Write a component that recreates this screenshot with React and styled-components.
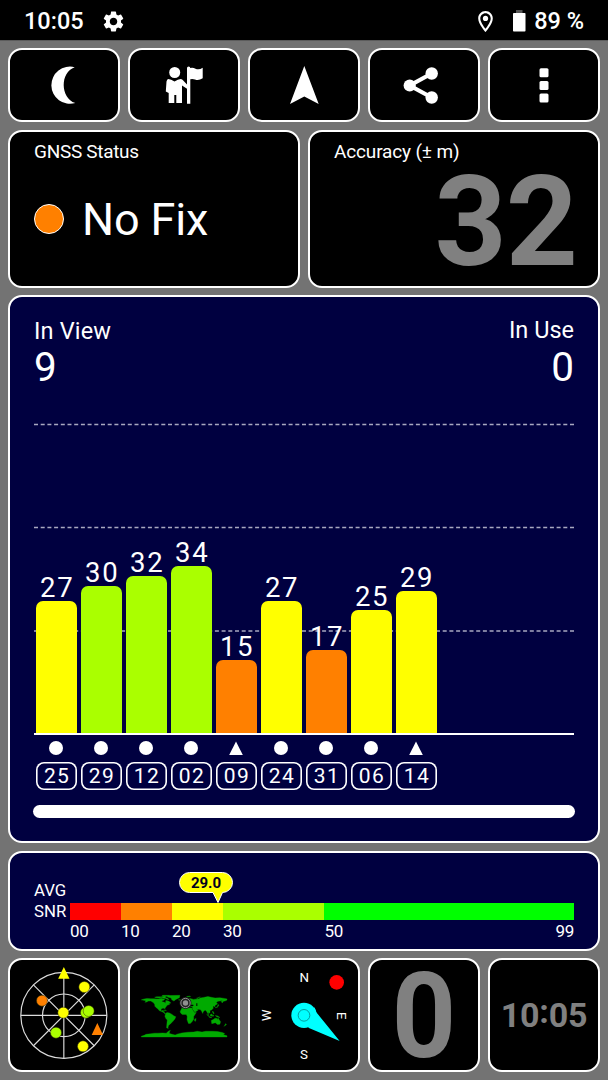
import React from "react";
import styled, { createGlobalStyle } from "styled-components";
import { MdSettings, MdOutlineLocationOn } from "react-icons/md";

const GlobalStyle = createGlobalStyle`
  * { box-sizing: border-box; }
  body { margin: 0; background: #737373; font-family: Roboto, "Liberation Sans", sans-serif; color: #fff; }
`;

const Screen = styled.div`
  width: 608px;
  height: 1080px;
  display: flex;
  flex-direction: column;
  background: #737373;
  overflow: hidden;
`;

const StatusBar = styled.header`
  height: 41px;
  flex: none;
  display: flex;
  align-items: center;
  padding: 2px 24px 0 24px;
  background: #000;
  border-bottom: 1px solid #5c5c5c;
  font-size: 23.5px;
  font-weight: 500;
  svg { display: block; }
`;
const Clock = styled.span`
  width: 77px;
`;
const StatusIcons = styled.div`
  margin-left: auto;
  display: flex;
  align-items: center;
`;
const BatteryIcon = styled.svg`
  margin: 0 8px 0 15px;
`;

const Content = styled.main`
  flex: 1;
  display: flex;
  flex-direction: column;
  justify-content: space-between;
  padding: 7px 8px 8px;
`;

const Card = styled.section`
  background: ${(p) => (p.$navy ? "#000040" : "#000")};
  border: 2px solid #fff;
  border-radius: 14px;
  min-width: 0;
`;

const Row = styled.div`
  display: flex;
  gap: 8px;
  height: ${(p) => p.$height}px;
  flex: none;
  > * { flex: 1 1 0; }
`;

const ToolButton = styled.button`
  background: #000;
  border: 2px solid #fff;
  border-radius: 14px;
  padding: 0;
  svg { display: block; width: 108px; height: 70px; }
`;

const InfoCard = styled(Card)`
  padding: 9px 21px 0 24px;
`;
const InfoLabel = styled.div`
  font-size: 19px;
  line-height: 22px;
  letter-spacing: ${(p) => p.$spacing || 0}px;
`;
const FixState = styled.div`
  display: flex;
  align-items: center;
  gap: 18px;
  height: 54px;
  margin-top: 29px;
  font-size: 45px;
  letter-spacing: -0.15px;
`;
const FixDot = styled.span`
  width: 30px;
  height: 30px;
  border-radius: 50%;
  background: #ff8000;
  border: 1px solid #fff;
`;
const AccuracyValue = styled.div`
  margin-top: 14px;
  font-size: 126px;
  line-height: 90px;
  font-weight: 700;
  letter-spacing: -1px;
  text-align: right;
  color: #808080;
`;

const SignalCard = styled(Card)`
  height: 548px;
  flex: none;
  display: flex;
  flex-direction: column;
  padding: 20px 24px 0;
`;
const Counts = styled.div`
  display: flex;
  justify-content: space-between;
  height: 84px;
`;
const Count = styled.div`
  text-align: ${(p) => p.$align || "left"};
`;
const CountLabel = styled.div`
  font-size: 23.5px;
  line-height: 27px;
  padding-top: ${(p) => (p.$low ? 1 : 0)}px;
  height: 28px;
  letter-spacing: ${(p) => (p.$low ? 0.15 : 0)}px;
`;
const CountValue = styled.div`
  font-size: 40.5px;
  line-height: 44px;
`;

const Plot = styled.div`
  position: relative;
  height: 334px;
  border-bottom: 2px solid #fff;
`;
const GridLines = styled.svg`
  position: absolute;
  left: 0;
  top: -1px;
`;
const Columns = styled.div`
  position: relative;
  display: flex;
  align-items: flex-end;
  gap: 4.4px;
  height: 100%;
  padding-left: 2.3px;
`;
const Column = styled.div`
  width: 40.6px;
  display: flex;
  flex-direction: column;
  align-items: center;
`;
const BarValue = styled.span`
  font-size: 27.5px;
  line-height: 24px;
  letter-spacing: 1.7px;
  margin: 0 0 1px 1.2px;
`;
const Bar = styled.div`
  width: 100%;
  height: ${(p) => p.$value * 4.93 - 0.6}px;
  border-radius: 7px 7px 0 0;
  background: ${(p) => p.$color};
`;
const Satellites = styled.div`
  display: flex;
  gap: 4.4px;
  padding: 6px 0 0 2.1px;
`;
const Marker = styled.svg`
  display: block;
  width: 14px;
  height: 14px;
  margin-bottom: 7px;
`;
const SatelliteId = styled.span`
  width: 100%;
  height: 27.5px;
  box-shadow: inset 0 0 0 1.6px #fff;
  border-radius: 8px;
  font-size: 21px;
  line-height: 28px;
  letter-spacing: 1.4px;
  padding-left: 1.4px;
  text-align: center;
`;
const ScrollTrack = styled.div`
  height: 13px;
  margin: 15.5px -1px 0;
  border-radius: 7px;
  background: #fff;
`;

const SnrCard = styled(Card)`
  height: 100px;
  flex: none;
  display: flex;
  padding: 0 24px;
`;
const SnrCaption = styled.div`
  width: 36px;
  padding-top: 27px;
  font-size: 16.8px;
  line-height: 21px;
`;
const SnrScale = styled.div`
  position: relative;
  flex: 1;
  padding-top: 50px;
`;
const Segments = styled.div`
  display: flex;
  height: 17px;
`;
const Segment = styled.div`
  width: ${(p) => p.$width}px;
  background: ${(p) => p.$color};
`;
const Ticks = styled.div`
  display: flex;
  font-size: 17px;
  line-height: 20px;
  letter-spacing: -0.3px;
  margin-top: 1px;
`;
const Tick = styled.span`
  width: ${(p) => p.$width}px;
`;
const Bubble = styled.div`
  position: absolute;
  left: 109px;
  top: 19px;
  width: 54px;
  height: 31px;
  font-size: 15px;
  font-weight: 700;
  line-height: 22px;
  text-align: center;
  color: #000020;
  svg { position: absolute; left: 0; top: 0; }
  span { position: relative; }
`;

const Tile = styled(Card)`
  display: flex;
  align-items: center;
  justify-content: center;
  color: #808080;
  font-weight: 700;
  svg { display: block; width: 108px; height: 110px; flex: none; }
`;
const Speed = styled.span`
  font-size: 118px;
  line-height: 110px;
  padding-top: 3px;
  transform: scaleX(0.95);
`;
const TileClock = styled.span`
  font-size: 34px;
  line-height: 40px;
  padding-bottom: 2px;
  letter-spacing: -0.2px;
`;
const Colon = styled.span`
  line-height: 1;
  vertical-align: 3.5px;
`;

const YELLOW = "#ffff00";
const LIME = "#aaff00";
const ORANGE = "#ff8000";

const satellites = [
  { id: "25", snr: 27, color: YELLOW },
  { id: "29", snr: 30, color: LIME },
  { id: "12", snr: 32, color: LIME },
  { id: "02", snr: 34, color: LIME },
  { id: "09", snr: 15, color: ORANGE, triangle: true },
  { id: "24", snr: 27, color: YELLOW },
  { id: "31", snr: 17, color: ORANGE },
  { id: "06", snr: 25, color: YELLOW },
  { id: "14", snr: 29, color: YELLOW, triangle: true },
];

const segments = [
  { label: "00", width: 51, color: "#ff0000" },
  { label: "10", width: 51, color: ORANGE },
  { label: "20", width: 51, color: YELLOW },
  { label: "30", width: 101.5, color: LIME },
  { label: "50", width: 249.5, color: "#00ff00" },
];

function Toolbar() {
  return (
    <Row $height={74}>
      <ToolButton aria-label="Night mode">
        <svg viewBox="10 50 108 70" fill="#fff">
          <path d="M74.700 67.200A18.600 18.600 0 1 0 75.300 103C60 98 60 72 74.700 67.200Z" />
        </svg>
      </ToolButton>
      <ToolButton aria-label="Survey">
        <svg viewBox="130 50 108 70" fill="#fff">
          <circle cx="174.700" cy="72.500" r="5.500" />
          <path d="M168.200 79Q171 79 174.500 81.500Q178 79 180.800 79Q182.300 79 183.200 80.500L187 84.500V68Q187 66.500 188.700 66.500Q190.300 66.500 190.300 68Q193 67.300 195.500 68.700Q199 70.300 202.700 67.700V78.300Q198.500 81 195 79.500Q192.500 78.500 190.300 79.300V103.700H187V88.700L182 85.500V103H176.300V95H174.300V103H168.700V93L165.800 91.500L166.500 81.500Q167 79 168.200 79Z" />
        </svg>
      </ToolButton>
      <ToolButton aria-label="Navigate">
        <svg viewBox="250 50 108 70" fill="#fff">
          <path d="M304.300 66L318.700 104L304.300 96.500L290 104Z" />
        </svg>
      </ToolButton>
      <ToolButton aria-label="Share">
        <svg viewBox="370 50 108 70" fill="#fff">
          <path d="M431.700 73.500L409.700 85.500L431.700 97.500" fill="none" stroke="#fff" strokeWidth="4.200" />
          <circle cx="409.700" cy="85.500" r="6.100" />
          <circle cx="431.700" cy="73.500" r="6.200" />
          <circle cx="431.700" cy="97.500" r="6.200" />
        </svg>
      </ToolButton>
      <ToolButton aria-label="Menu">
        <svg viewBox="490 50 108 70" fill="#fff">
          <rect x="539.500" y="68.300" width="9" height="9" rx="1.500" />
          <rect x="539.500" y="81" width="9" height="9" rx="1.500" />
          <rect x="539.500" y="93.600" width="9" height="9" rx="1.500" />
        </svg>
      </ToolButton>
    </Row>
  );
}

function SignalChart() {
  return (
    <SignalCard $navy>
      <Counts>
        <Count>
          <CountLabel $low>In View</CountLabel>
          <CountValue>9</CountValue>
        </Count>
        <Count $align="right">
          <CountLabel>In Use</CountLabel>
          <CountValue>0</CountValue>
        </Count>
      </Counts>
      <Plot>
        <GridLines width="540" height="333" stroke="#a8a8c0" strokeWidth="1.300" strokeDasharray="4 2.700">
          <path d="M0 24.500H540M0 127.500H540M0 231H540" />
        </GridLines>
        <Columns>
          {satellites.map((s) => (
            <Column key={s.id}>
              <BarValue>{s.snr}</BarValue>
              <Bar $value={s.snr} $color={s.color} />
            </Column>
          ))}
        </Columns>
      </Plot>
      <Satellites>
        {satellites.map((s) => (
          <Column key={s.id}>
            <Marker viewBox="0 0 14 14" fill="#fff">
              {s.triangle ? <path d="M7 0.500L13.800 14H0.200Z" /> : <circle cx="7" cy="7" r="7" />}
            </Marker>
            <SatelliteId>{s.id}</SatelliteId>
          </Column>
        ))}
      </Satellites>
      <ScrollTrack />
    </SignalCard>
  );
}

function AverageSnr() {
  return (
    <SnrCard $navy>
      <SnrCaption>
        AVG
        <br />
        SNR
      </SnrCaption>
      <SnrScale>
        <Segments>
          {segments.map((s) => (
            <Segment key={s.label} $width={s.width} $color={s.color} />
          ))}
        </Segments>
        <Ticks>
          {segments.map((s) => (
            <Tick key={s.label} $width={s.label === "50" ? 231 : s.width}>
              {s.label}
            </Tick>
          ))}
          <span>99</span>
        </Ticks>
        <Bubble>
          <svg width="54" height="31" viewBox="0 0 54 31">
            <path d="M10.500 0.500H43.500A10 10 0 0 1 43.500 20.500L39 30.500L34 20.500H10.500A10 10 0 0 1 10.500 0.500Z" fill={YELLOW} stroke="#fff" />
          </svg>
          <span>29.0</span>
        </Bubble>
      </SnrScale>
    </SnrCard>
  );
}

function SkyView() {
  const dots = [
    [126, 152, ORANGE],
    [253, 111, YELLOW],
    [258, 188, LIME],
    [266, 183, LIME],
    [190, 188, YELLOW],
    [168, 248, LIME],
    [249, 289, YELLOW],
  ];
  return (
    <svg viewBox="30 30 324 330">
      <g fill="none" stroke="#dcdcdc" strokeWidth="3.500">
        <circle cx="191.500" cy="196" r="129" />
        <circle cx="191.500" cy="196" r="64" />
        <path d="M62.500 196H320.500M191.500 67V325M100.300 104.800L282.700 287.200M282.700 104.800L100.300 287.200" />
      </g>
      {dots.map(([x, y, color]) => (
        <circle key={`${x}-${y}`} cx={x} cy={y} r="16.500" fill={color} stroke="#303000" strokeWidth="1.500" />
      ))}
      <path d="M191.500 51L208.500 86H174.500Z" fill={YELLOW} />
      <path d="M292 219L309 255H275Z" fill={ORANGE} />
    </svg>
  );
}

// Coastlines as longitude,latitude pairs
const land = [
  "-180,65 -168,69 -156,71 -140,70 -128,70 -115,69 -108,69 -95,72 -90,70 -82,70 -84,64 -94,60 -92,57 -82,55 -80,51 -78,55 -77,62 -70,61 -64,59 -56,52 -65,49 -61,46 -70,43 -75,38 -76,35 -81,31 -80,25 -83,30 -90,30 -97,27 -97,21 -94,18 -90,21 -87,21 -88,16 -83,15 -83,10 -78,8 -83,8 -88,13 -95,16 -105,20 -110,27 -117,32 -123,38 -124,47 -130,54 -140,60 -150,60 -158,56 -165,55 -160,60 -166,62",
  "-124,76 -116,74 -105,73 -95,75 -88,73 -80,72 -72,68 -64,66 -68,71 -80,75 -78,77 -92,77 -100,78 -116,78",
  "-95,80 -90,84 -62,84 -76,79 -84,77",
  "-72,78 -66,83 -18,84 -20,74 -35,67 -43,60 -52,65 -55,73 -66,76",
  "-78,8 -72,12 -62,10 -51,4 -44,-2 -35,-6 -39,-15 -48,-26 -58,-36 -65,-42 -68,-50 -67,-55 -74,-52 -73,-40 -71,-20 -77,-13 -81,-4",
  "-17,15 -10,30 -5,36 10,37 20,32 32,31 36,22 43,12 51,12 40,-5 40,-16 33,-27 26,-34 18,-34 12,-18 13,-5 9,4 -8,4 -14,9",
  "-9,37 -9,43 -1,44 -4,48 8,54 10,57 20,54 24,59 22,64 17,60 12,56 5,60 12,67 25,71 40,67 45,68 60,69 68,73 80,75 100,79 113,76 130,73 150,74 170,71 180,69 180,65 177,62 163,58 160,52 156,58 162,62 142,59 135,54 140,48 130,42 129,35 126,38 121,39 122,30 115,22 108,20 109,12 105,9 100,13 103,2 98,10 94,17 88,22 80,15 78,8 73,18 67,25 57,26 50,30 56,25 59,22 45,13 38,22 34,30 36,36 27,37 26,41 23,38 19,41 13,45 18,40 16,38 9,44 3,42 -2,37",
  "114,-22 122,-18 130,-12 136,-12 141,-17 142,-11 153,-27 150,-37 140,-38 131,-31 116,-35",
  "95,5 104,-3 106,-6 98,0",
  "109,2 117,6 118,0 115,-4 110,-2",
  "105,-6 115,-8 115,-10 105,-8",
  "119,1 124,1 122,-5 119,-4",
  "131,-1 141,-3 150,-9 143,-8 137,-6",
  "120,18 124,12 126,7 122,8 119,14",
  "130,32 140,36 142,45 146,43 140,34 134,33",
  "44,-16 50,-13 48,-25 44,-24",
  "173,-35 178,-38 174,-42 167,-46 172,-41",
  "-5,50 1,52 -3,59 -6,57",
  "-24,65 -14,66 -18,63",
  "-85,22 -75,20 -75,19 -84,21",
  "10,79 25,81 27,79 15,77",
  "52,72 68,77 64,76 56,71",
  "-180,-88 -168,-84 -160,-80 -140,-77 -125,-75 -110,-75 -90,-74 -75,-75 -68,-68 -58,-63 -62,-70 -62,-76 -50,-80 -38,-83 -30,-79 -10,-74 15,-71 40,-70 55,-67 75,-70 90,-67 120,-67 140,-68 160,-72 170,-76 165,-81 180,-86 180,-91 -180,-91",
];

function WorldMap() {
  return (
    <svg viewBox="30 30 324 330">
      <g transform="translate(192.500 196) scale(0.714 -0.714)" fill="#00aa00" stroke="#00aa00" strokeWidth="1.500">
        {land.map((points) => (
          <polygon key={points} points={points} />
        ))}
      </g>
      <path d="M212 164H220V168H212ZM229 160H232V168H229Z" fill="#000" />
      <circle cx="196.500" cy="159" r="18" fill="#222" />
      <circle cx="196.500" cy="159" r="14" fill="none" stroke="#909090" strokeWidth="3" />
      <circle cx="196.500" cy="159" r="8" fill="#909090" />
    </svg>
  );
}

function Compass() {
  return (
    <svg viewBox="30 30 324 330">
      <g fill="#fff" fontFamily="Roboto, sans-serif" fontSize="40" fontWeight="400" textAnchor="middle">
        <text x="193" y="97">N</text>
        <text x="192" y="326">S</text>
        <text transform="translate(93 196) rotate(-90)">W</text>
        <text transform="translate(291 197) rotate(90)">E</text>
      </g>
      <circle cx="290" cy="97" r="22" fill="#f00" />
      <path d="M222 171Q227 176 229 187L299 273L205 233Z" fill="#0ff" />
      <circle cx="192" cy="196" r="38" fill="#0ff" />
      <circle cx="192" cy="196" r="17.500" fill="none" stroke="#008a8a" strokeWidth="2.500" />
    </svg>
  );
}

const InfoRow = styled(Row)`
  margin-top: 1px;
`;
const SnrSlot = styled.div`
  margin-top: 1px;
`;

export default function App() {
  return (
    <Screen>
      <GlobalStyle />
      <StatusBar>
        <Clock>10:05</Clock>
        <MdSettings size={25} />
        <StatusIcons>
          <MdOutlineLocationOn size={25} />
          <BatteryIcon width="13" height="22" viewBox="0 0 13 22">
            <rect x="3" y="0" width="6.500" height="3.500" fill="#555" />
            <rect x="0" y="3" width="12.500" height="18.500" rx="0.800" fill="#fff" />
          </BatteryIcon>
          <span>89 %</span>
        </StatusIcons>
      </StatusBar>
      <Content>
        <Toolbar />
        <InfoRow $height={158}>
          <InfoCard>
            <InfoLabel $spacing={-0.3}>GNSS Status</InfoLabel>
            <FixState>
              <FixDot />
              No Fix
            </FixState>
          </InfoCard>
          <InfoCard>
            <InfoLabel $spacing={-0.15}>Accuracy (± m)</InfoLabel>
            <AccuracyValue>32</AccuracyValue>
          </InfoCard>
        </InfoRow>
        <SignalChart />
        <SnrSlot>
          <AverageSnr />
        </SnrSlot>
        <Row $height={114}>
          <Tile><SkyView /></Tile>
          <Tile><WorldMap /></Tile>
          <Tile><Compass /></Tile>
          <Tile><Speed>0</Speed></Tile>
          <Tile>
            <TileClock>10<Colon>:</Colon>05</TileClock>
          </Tile>
        </Row>
      </Content>
    </Screen>
  );
}
